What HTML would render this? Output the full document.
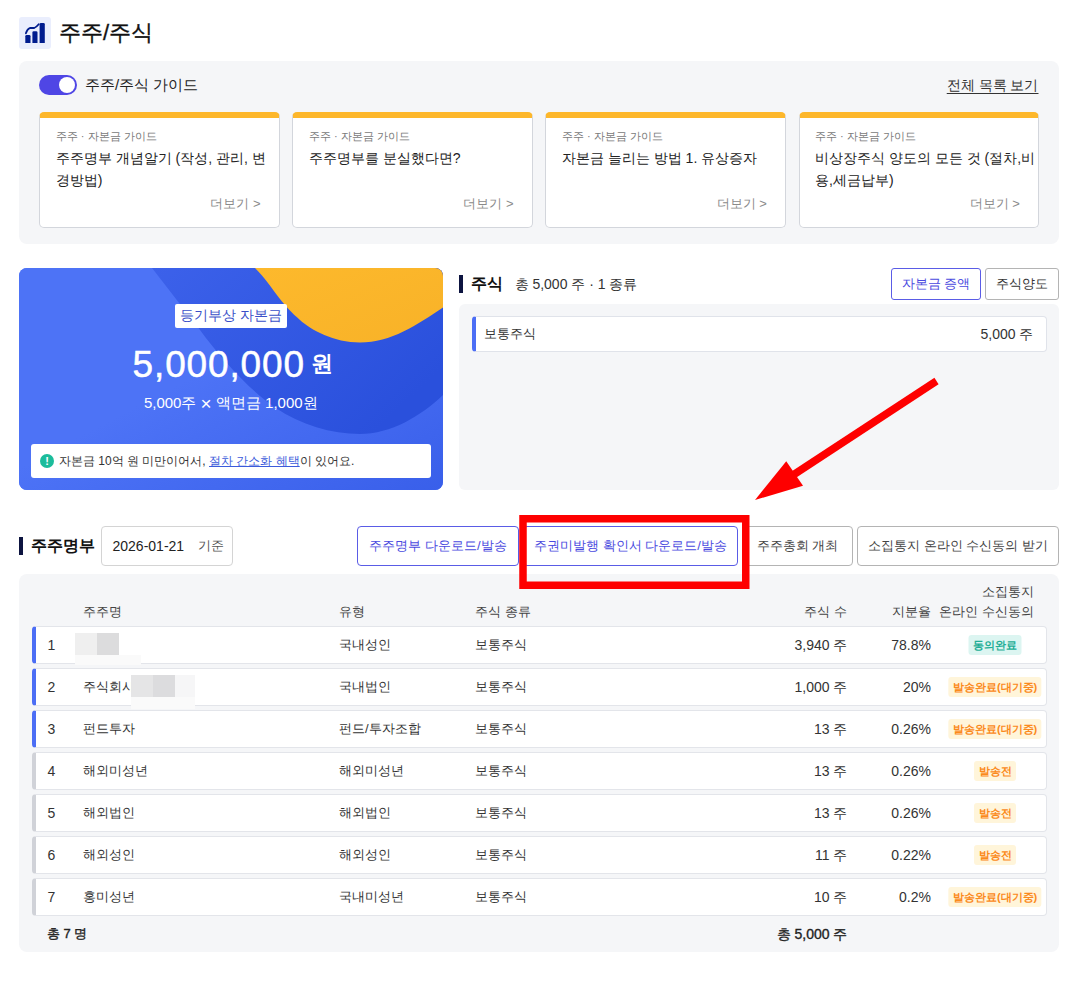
<!DOCTYPE html>
<html lang="ko">
<head>
<meta charset="utf-8">
<title>주주/주식</title>
<style>
*{box-sizing:border-box;margin:0;padding:0}
html,body{width:1086px;height:991px;background:#fff;overflow:hidden}
body{font-family:"Liberation Sans",sans-serif;color:#222;position:relative;font-size:13px}
.abs{position:absolute;white-space:nowrap}
.t{position:absolute;white-space:nowrap;line-height:20px;height:20px}
.r{text-align:right}
.c{text-align:center}
.panel{position:absolute;background:#f5f6f8;border-radius:8px}
/* guide cards */
.card{position:absolute;top:111.75px;width:240.35px;height:116.15px;background:#fff;border:1px solid #d3d6dc;border-top:6px solid #fdb72b;border-radius:5px}
.card .s{position:absolute;left:15.5px;top:8px;font-size:11px;line-height:20px;color:#7a7a7a;white-space:nowrap}
.card .h{position:absolute;left:15.5px;top:30.5px;font-size:14px;line-height:21.5px;color:#222;white-space:nowrap}
.card .m{position:absolute;right:18px;top:76.5px;font-size:13px;line-height:20px;color:#8a8a8a;white-space:nowrap}
/* buttons */
.btn{position:absolute;background:#fff;border:1px solid #b4b4b4;border-radius:4px;color:#444;font-size:13px;text-align:center;white-space:nowrap;overflow:hidden}
.btn.p{border-color:#5a5ce6;color:#4a4ae0}
.bar{position:absolute;width:4px;height:18px;background:#0d1440}
/* table rows */
.row{position:absolute;left:32px;width:1014.5px;height:37.25px;background:#fff;border:1px solid #e3e5ea;border-left:4px solid #4c6ef5;border-radius:4px}
.row.g{border-left-color:#d0d2d8}
.row span{position:absolute;top:7.5px;line-height:20px;font-size:13px;color:#333;white-space:nowrap}
.row .n{left:5.5px;width:20px;text-align:center;font-size:14px}
.row .a{left:47px}
.row .b{left:303px}
.row .d{left:439px}
.row .e{right:198px;text-align:right;font-size:14px}
.row .f{right:114.5px;text-align:right;font-size:14px}
.row .bd{top:8px;height:20px;line-height:20px;font-size:11px;font-weight:700;border-radius:3px;text-align:center;left:959.1px;transform:translateX(-50%);padding:0 4.5px;min-width:90px;background:#fff5da;color:#fb8a1c}
.row .bd.s3{min-width:40px}
.row .bd.ok{min-width:49.5px;background:#dcf5f1;color:#1fae96}
.hd{position:absolute;font-size:13px;line-height:20px;color:#444;white-space:nowrap}
</style>
</head>
<body>

<!-- page title -->
<div class="abs" style="left:19px;top:17px;width:32px;height:32px;background:#eaeefd;border-radius:3px">
<svg width="32" height="32" viewBox="0 0 32 32" style="display:block">
<path d="M6.3 25.9 V19.3 Q6.3 18 7.6 18 H10.2 Q11.5 18 11.5 19.3 V25.9 Z" fill="#001c8e"/>
<path d="M13.4 25.9 V15.5 Q13.4 14.2 14.7 14.2 H17.2 Q18.5 14.2 18.5 15.5 V25.9 Z" fill="#001c8e"/>
<path d="M20.6 25.9 V7.2 Q20.6 5.9 21.9 5.9 H24.5 Q25.8 5.9 25.8 7.2 V25.9 Z" fill="#001c8e"/>
<path d="M6.9 16.3 C7.7 13.7 9.2 11.7 10.9 11 L15.3 11 C17 10.5 18.4 8.9 19.7 7.3" fill="none" stroke="#001c8e" stroke-width="1.8" stroke-linecap="round" stroke-linejoin="round"/>
</svg>
</div>
<div class="abs" style="left:59px;top:19px;font-size:22px;line-height:28px;font-weight:500;color:#111;-webkit-text-stroke:0.35px #111">주주/주식</div>

<!-- guide panel -->
<div class="panel" style="left:19px;top:61px;width:1039.7px;height:182.7px"></div>
<div class="abs" style="left:39px;top:75px;width:38px;height:20px;border-radius:10px;background:#4f46e5">
<div style="position:absolute;left:19.5px;top:2px;width:16px;height:16px;border-radius:8px;background:#fff"></div>
</div>
<div class="t" style="left:85px;top:74.5px;font-size:15px;color:#222">주주/주식 가이드</div>
<div class="t r" style="right:47.5px;top:75px;font-size:14px;color:#333;text-decoration:underline;text-underline-offset:3px">전체 목록 보기</div>

<div class="card" style="left:39.25px"><div class="s">주주 · 자본금 가이드</div><div class="h">주주명부 개념알기 (작성, 관리, 변<br>경방법)</div><div class="m">더보기 &gt;</div></div>
<div class="card" style="left:292.35px"><div class="s">주주 · 자본금 가이드</div><div class="h">주주명부를 분실했다면?</div><div class="m">더보기 &gt;</div></div>
<div class="card" style="left:545.45px"><div class="s">주주 · 자본금 가이드</div><div class="h">자본금 늘리는 방법 1. 유상증자</div><div class="m">더보기 &gt;</div></div>
<div class="card" style="left:798.55px"><div class="s">주주 · 자본금 가이드</div><div class="h">비상장주식 양도의 모든 것 (절차,비<br>용,세금납부)</div><div class="m">더보기 &gt;</div></div>

<!-- capital card -->
<div class="abs" style="left:19px;top:268px;width:423.5px;height:222px;border-radius:8px;overflow:hidden;background:#4a6ff4">
<svg width="424" height="222" viewBox="0 0 424 222" style="position:absolute;left:0;top:0;display:block">
<defs>
<linearGradient id="gb" x1="0" y1="0" x2="1" y2="1"><stop offset="0" stop-color="#4d73f6"/><stop offset="0.45" stop-color="#4d73f6"/><stop offset="1" stop-color="#395fea"/></linearGradient>
<linearGradient id="gd" x1="0" y1="0" x2="1" y2="0.6"><stop offset="0" stop-color="#3c61ea"/><stop offset="1" stop-color="#2a50dc"/></linearGradient>
<linearGradient id="go" x1="0" y1="0" x2="1" y2="1"><stop offset="0" stop-color="#fdb92c"/><stop offset="1" stop-color="#f8b228"/></linearGradient>
</defs>
<rect width="424" height="222" fill="url(#gb)"/>
<path d="M133 0 L181 62 C200 88 230 122 256 139.5 C282 157 312 166 341 166 C372 166 402 148 424 127 L424 0 Z" fill="url(#gd)"/>
<path d="M236 0 C246 10 252 19 256 24.5 C266 38 273 45 281 52 C292 62 315 74.5 341 74.5 C372 74.5 398 57 424 39.5 L424 0 Z" fill="url(#go)"/>
</svg>
<div class="abs c" style="left:0;top:36px;width:423.5px;height:24px"><span style="display:inline-block;min-width:102.5px;height:23.5px;padding:0 5px;background:#fff;border-radius:2px;font-size:14px;line-height:23.5px;color:#3a4fc8">등기부상 자본금</span></div>
<div class="abs c" style="left:2px;top:75px;width:423.5px;height:44px;line-height:44px;color:#fff"><span style="font-size:37px;letter-spacing:0.85px;-webkit-text-stroke:0.5px #fff">5,000,000</span><span style="font-size:22px;font-weight:700;margin-left:6px;position:relative;top:-6px">원</span></div>
<div class="abs c" style="left:0;top:124.5px;width:423.5px;font-size:15px;line-height:20px;color:#fff">5,000주 <span style="font-size:19px;line-height:20px;vertical-align:-1.5px">×</span> 액면금 1,000원</div>
<div class="abs" style="left:12px;top:176px;width:399.5px;height:33.5px;background:#fff;border-radius:3px">
<div style="position:absolute;left:9px;top:9.5px;width:14px;height:14px;border-radius:7px;background:#1bbc9b;color:#fff;font-size:11px;font-weight:700;line-height:14px;text-align:center">!</div>
<div class="abs" style="left:28px;top:6.5px;font-size:12px;line-height:20px;color:#333">자본금 10억 원 미만이어서, <span style="color:#3b5bdb;text-decoration:underline">절차 간소화 혜택</span>이 있어요.</div>
</div>
</div>

<!-- stock section -->
<div class="bar" style="left:459px;top:275px"></div>
<div class="t" style="left:471px;top:273.5px;font-size:16px;font-weight:700;color:#111">주식</div>
<div class="t" style="left:514.5px;top:274px;font-size:14px;color:#333">총 5,000 주 · 1 종류</div>
<div class="btn p" style="left:891px;top:268px;width:90px;height:32px;line-height:30px;font-size:13px;border-radius:3px">자본금 증액</div>
<div class="btn" style="left:985px;top:268px;width:74px;height:32px;line-height:30px;font-size:13px;border-radius:3px;color:#333">주식양도</div>
<div class="panel" style="left:459px;top:304px;width:600px;height:185.5px;border-radius:6px"></div>
<div class="abs" style="left:472px;top:316px;width:574.5px;height:35.5px;background:#fff;border:1px solid #e0e3ea;border-left:4px solid #4c6ef5;border-radius:4px">
<div class="t" style="left:8px;top:6.5px;font-size:13px;color:#333">보통주식</div>
<div class="t r" style="right:12px;top:6.5px;font-size:14px;color:#333">5,000 주</div>
</div>

<!-- register header -->
<div class="bar" style="left:19px;top:537px"></div>
<div class="t" style="left:30.5px;top:535.5px;font-size:16px;font-weight:700;color:#111">주주명부</div>
<div class="abs" style="left:101px;top:526px;width:131.5px;height:40px;background:#fff;border:1px solid #d4d4d4;border-radius:4px">
<div class="t" style="left:10.5px;top:9px;font-size:14px;color:#222">2026-01-21</div>
<div class="t" style="left:95.5px;top:9px;font-size:13px;color:#555">기준</div>
</div>
<div class="btn p" style="left:357px;top:526px;width:162px;height:40px;line-height:38px">주주명부 다운로드/발송</div>
<div class="btn p" style="left:523px;top:526px;width:215px;height:40px;line-height:38px">주권미발행 확인서 다운로드/발송</div>
<div class="btn" style="left:742px;top:526px;width:111px;height:40px;line-height:38px">주주총회 개최</div>
<div class="btn" style="left:857px;top:526px;width:202px;height:40px;line-height:38px">소집통지 온라인 수신동의 받기</div>

<!-- register table -->
<div class="panel" style="left:19px;top:574px;width:1040px;height:377.5px"></div>
<div class="hd" style="left:83px;top:602px">주주명</div>
<div class="hd" style="left:339px;top:602px">유형</div>
<div class="hd" style="left:475px;top:602px">주식 종류</div>
<div class="hd r" style="right:239px;top:602px">주식 수</div>
<div class="hd r" style="right:155px;top:602px">지분율</div>
<div class="hd r" style="right:52px;top:582px">소집통지</div>
<div class="hd r" style="right:52px;top:602px">온라인 수신동의</div>

<div class="row" style="top:626.25px"><span class="n">1</span><span class="a"></span><span class="b">국내성인</span><span class="d">보통주식</span><span class="e">3,940 주</span><span class="f">78.8%</span><span class="bd ok">동의완료</span></div>
<div class="row" style="top:668.25px"><span class="n">2</span><span class="a">주식회사</span><span class="b">국내법인</span><span class="d">보통주식</span><span class="e">1,000 주</span><span class="f">20%</span><span class="bd">발송완료(대기중)</span></div>
<div class="row" style="top:710.25px"><span class="n">3</span><span class="a">펀드투자</span><span class="b">펀드/투자조합</span><span class="d">보통주식</span><span class="e">13 주</span><span class="f">0.26%</span><span class="bd">발송완료(대기중)</span></div>
<div class="row g" style="top:752.25px"><span class="n">4</span><span class="a">해외미성년</span><span class="b">해외미성년</span><span class="d">보통주식</span><span class="e">13 주</span><span class="f">0.26%</span><span class="bd s3">발송전</span></div>
<div class="row g" style="top:794.25px"><span class="n">5</span><span class="a">해외법인</span><span class="b">해외법인</span><span class="d">보통주식</span><span class="e">13 주</span><span class="f">0.26%</span><span class="bd s3">발송전</span></div>
<div class="row g" style="top:836.25px"><span class="n">6</span><span class="a">해외성인</span><span class="b">해외성인</span><span class="d">보통주식</span><span class="e">11 주</span><span class="f">0.22%</span><span class="bd s3">발송전</span></div>
<div class="row g" style="top:878.25px"><span class="n">7</span><span class="a">홍미성년</span><span class="b">국내미성년</span><span class="d">보통주식</span><span class="e">10 주</span><span class="f">0.2%</span><span class="bd">발송완료(대기중)</span></div>

<div class="hd" style="left:47px;top:923.5px;color:#222;-webkit-text-stroke:0.35px #222">총 7 명</div>
<div class="hd r" style="right:238.5px;top:923.5px;font-size:14px;color:#222;-webkit-text-stroke:0.35px #222">총 5,000 주</div>

<!-- redaction blur blocks -->
<div class="abs" style="left:75px;top:632.5px;width:22px;height:22px;background:#efefef"></div>
<div class="abs" style="left:97px;top:632.5px;width:22px;height:22px;background:#dcdcdd"></div>
<div class="abs" style="left:75px;top:654.5px;width:65.5px;height:10.5px;background:#fafafa"></div>
<div class="abs" style="left:130.5px;top:674.5px;width:22.5px;height:22px;background:#e5e5e6"></div>
<div class="abs" style="left:153px;top:674.5px;width:22px;height:22px;background:#dcdcde"></div>
<div class="abs" style="left:175px;top:674.5px;width:19.5px;height:22px;background:#f6f6f7"></div>
<div class="abs" style="left:130.5px;top:696.5px;width:64px;height:12px;background:#fafafa"></div>

<!-- red annotation -->
<svg class="abs" style="left:0;top:0;pointer-events:none" width="1086" height="991" viewBox="0 0 1086 991">
<rect x="523" y="518.75" width="222.75" height="66.5" fill="none" stroke="#fe0000" stroke-width="7.5"/>
<line x1="936.5" y1="381" x2="792" y2="475.7" stroke="#fe0000" stroke-width="7.6"/>
<polygon points="755,500 786.25,461.25 803,485.75" fill="#fe0000"/>
</svg>

</body>
</html>
